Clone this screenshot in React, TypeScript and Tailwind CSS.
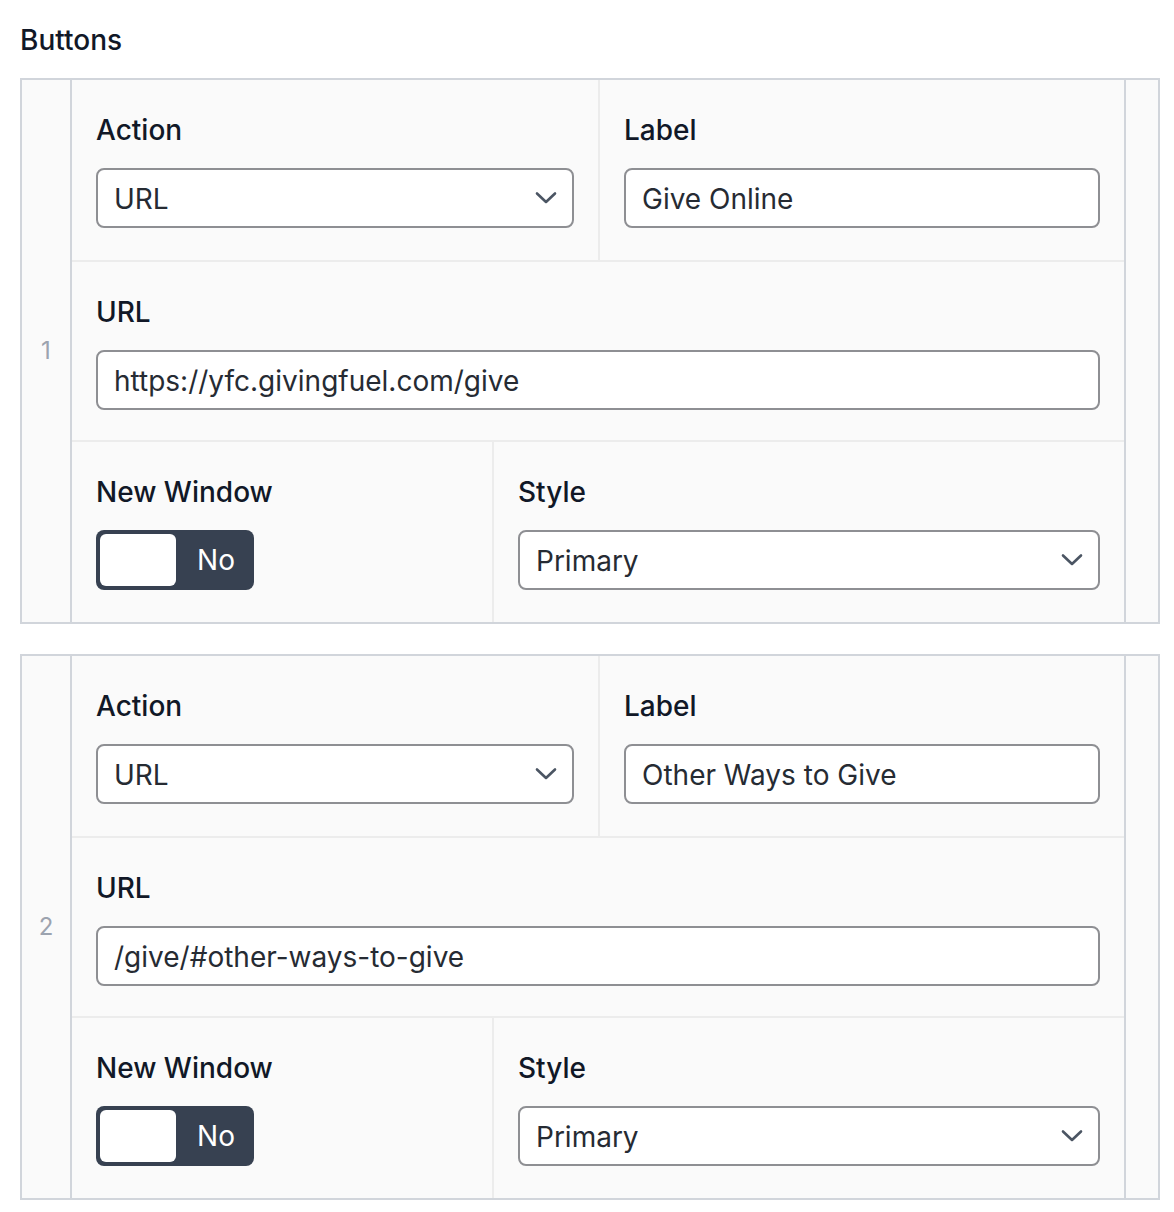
import React from "react";

function Chevron() {
  return (
    <svg width="22" height="14" viewBox="0 0 22 14" fill="none" className="shrink-0">
      <path d="M2 2.5 L11 11 L20 2.5" stroke="#4b5563" strokeWidth="2.6" strokeLinecap="round" strokeLinejoin="round" />
    </svg>
  );
}

function Label({ children }: { children: React.ReactNode }) {
  return <div className="text-[28px] leading-[36px] font-medium text-[#111827]">{children}</div>;
}

function Select({ value }: { value: string }) {
  return (
    <div className="h-[60px] rounded-[8px] border-2 border-[#8e8f93] bg-white pl-4 pr-[15px] flex items-center justify-between">
      <span className="text-[28px] text-[#262b33] pt-[2px]">{value}</span>
      <Chevron />
    </div>
  );
}

function Input({ value }: { value: string }) {
  return (
    <div className="h-[60px] rounded-[8px] border-2 border-[#8e8f93] bg-white px-4 flex items-center">
      <span className="text-[28px] text-[#262b33] pt-[2px]">{value}</span>
    </div>
  );
}

function Toggle() {
  return (
    <div className="w-[158px] h-[60px] rounded-[8px] bg-[#374151] p-[4px] flex items-center">
      <div className="w-[76px] h-[52px] rounded-[6px] bg-white" />
      <div className="flex-1 text-center text-[28px] text-white pl-[6px]">No</div>
    </div>
  );
}

function Field({ label, children, className = "" }: { label: string; children: React.ReactNode; className?: string }) {
  return (
    <div className={"px-6 pt-8 flex flex-col gap-5 " + className}>
      <Label>{label}</Label>
      {children}
    </div>
  );
}

function Card({ n, label, url }: { n: number; label: string; url: string }) {
  return (
    <div className="flex border-2 border-[#d1d5db] bg-[#fafafa]">
      <div className="w-[50px] shrink-0 border-r-2 border-[#d1d5db] flex items-center justify-center text-[24px] text-[#9ca3af]">
        {n}
      </div>
      <div className="flex-1 flex flex-col">
        <div className="grid grid-cols-[528px_1fr] border-b-2 border-[#ececec]">
          <Field label="Action" className="border-r-2 border-[#ececec] pb-8">
            <Select value="URL" />
          </Field>
          <Field label="Label" className="pb-8">
            <Input value={label} />
          </Field>
        </div>
        <div className="border-b-2 border-[#ececec]">
          <Field label="URL" className="pb-[30px]">
            <Input value={url} />
          </Field>
        </div>
        <div className="grid grid-cols-[422px_1fr]">
          <Field label="New Window" className="border-r-2 border-[#ececec] pb-8">
            <Toggle />
          </Field>
          <Field label="Style" className="pb-8">
            <Select value="Primary" />
          </Field>
        </div>
      </div>
      <div className="w-[34px] shrink-0 border-l-2 border-[#d1d5db]" />
    </div>
  );
}

export default function App() {
  return (
    <div className="bg-white min-h-[1212px] px-5 pt-[22px]" style={{ fontFamily: "Inter, 'Noto Sans', sans-serif" }}>
      <div className="text-[28px] leading-[36px] font-medium text-[#111827] mb-[20px]">Buttons</div>
      <div className="flex flex-col gap-[30px] w-[1140px]">
        <Card n={1} label="Give Online" url="https://yfc.givingfuel.com/give" />
        <Card n={2} label="Other Ways to Give" url="/give/#other-ways-to-give" />
      </div>
    </div>
  );
}
